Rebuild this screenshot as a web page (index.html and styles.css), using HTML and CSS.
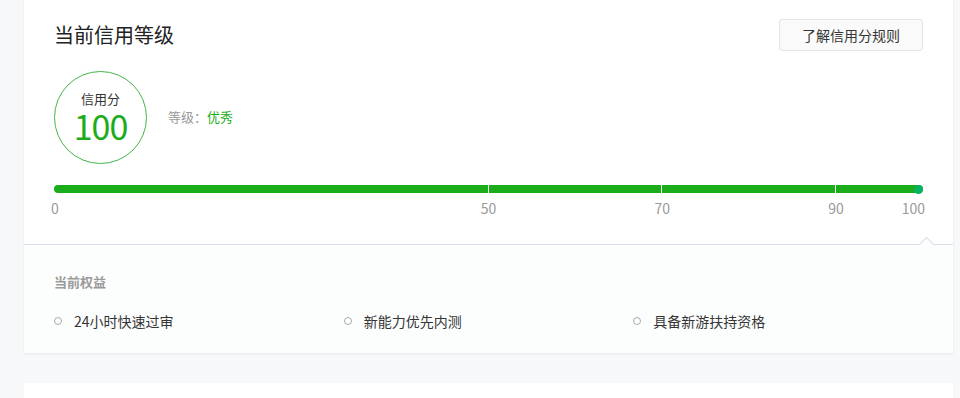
FILE: index.html
```html
<!DOCTYPE html>
<html lang="zh-CN">
<head>
    <meta charset="UTF-8">
    <meta name="viewport" content="width=device-width, initial-scale=1.0">
    <title>信用等级</title>
    <link rel="stylesheet" href="styles.css">
</head>
<body>
<main class="page">
    <section class="card">
        <div class="card-top">
            <div class="card-head">
                <h2 class="card-title">当前信用等级</h2>
                <a class="btn" href="#">了解信用分规则</a>
            </div>

            <div class="score">
                <div class="score-circle">
                    <span class="score-label">信用分</span>
                    <span class="score-value">100</span>
                </div>
                <div class="score-level">等级：<em>优秀</em></div>
            </div>

            <div class="bar">
                <div class="bar-track">
                    <i class="bar-tick" style="left: 50%"></i>
                    <i class="bar-tick" style="left: 70%"></i>
                    <i class="bar-tick" style="left: 90%"></i>
                    <i class="bar-dot"></i>
                </div>
                <div class="bar-scale">
                    <span class="bar-num bar-num-first" style="left: 0%">0</span>
                    <span class="bar-num" style="left: 50%">50</span>
                    <span class="bar-num" style="left: 70%">70</span>
                    <span class="bar-num" style="left: 90%">90</span>
                    <span class="bar-num bar-num-last" style="left: 100%">100</span>
                </div>
            </div>
        </div>

        <div class="card-bottom">
            <h3 class="rights-title">当前权益</h3>
            <ul class="rights">
                <li>24小时快速过审</li>
                <li>新能力优先内测</li>
                <li>具备新游扶持资格</li>
            </ul>
        </div>
    </section>

    <section class="card card-next"></section>
</main>
</body>
</html>
```

FILE: styles.css
```css
body {
    margin: 0;
    padding: 0;
    background: #f7f8fa;
    color: #353535;
    font-family: "Noto Sans CJK SC", "Noto Sans", sans-serif;
    overflow: hidden;
}

.page {
    width: 929px;
    margin-left: 24px;
}

.card {
    background: #fff;
    box-shadow: 0 1px 2px rgba(0, 0, 0, 0.08);
}

.card-top {
    position: relative;
    padding: 19px 30px 0;
    height: 225px;
    border-bottom: 1px solid #d9dde8;
}

/* little arrow pointing at the current score */
.card-top::after {
    content: "";
    position: absolute;
    right: 21px;
    bottom: -6px;
    width: 10px;
    height: 10px;
    background: #fcfdfd;
    border-top: 1px solid #d9dde8;
    border-left: 1px solid #d9dde8;
    transform: rotate(45deg);
}

.card-head {
    display: flex;
    justify-content: space-between;
    align-items: center;
    height: 32px;
}

.card-title {
    margin: 0;
    font-size: 20px;
    font-weight: normal;
    color: #222;
    line-height: 32px;
}

.btn {
    display: block;
    width: 142px;
    height: 30px;
    line-height: 30px;
    text-align: center;
    border: 1px solid #e4e4e8;
    border-radius: 3px;
    background: #fafafa;
    color: #353535;
    font-size: 14px;
    text-decoration: none;
}

.score {
    display: flex;
    align-items: center;
    margin-top: 20px;
}

.score-circle {
    box-sizing: border-box;
    width: 93px;
    height: 93px;
    border: 1px solid #44b549;
    border-radius: 50%;
    display: flex;
    flex-direction: column;
    align-items: center;
    padding-top: 18px;
}

.score-label {
    font-size: 13px;
    line-height: 18px;
    color: #353535;
}

.score-value {
    margin-top: 1px;
    font-size: 34px;
    line-height: 34px;
    color: #1aad19;
    letter-spacing: -1px;
}

.score-level {
    margin-left: 21px;
    margin-top: -2px;
    font-size: 13px;
    color: #9a9a9a;
}

.score-level em {
    font-style: normal;
    color: #1aad19;
}

.bar {
    margin-top: 21px;
}

.bar-track {
    position: relative;
    height: 8px;
    border-radius: 4px;
    background: #1aad19;
}

.bar-tick {
    position: absolute;
    top: 0;
    width: 1px;
    height: 8px;
    margin-left: -1px;
    background: #fff;
}

.bar-dot {
    position: absolute;
    right: 0;
    top: -0.5px;
    width: 9px;
    height: 9px;
    border-radius: 50%;
    background: #07b262;
}

.bar-scale {
    position: relative;
    height: 28px;
}

.bar-num {
    position: absolute;
    top: 5px;
    transform: translateX(-50%);
    font-size: 14px;
    line-height: 20px;
    color: #9a9a9a;
}

.bar-num-first {
    transform: translateX(-3px);
}

.bar-num-last {
    transform: translateX(-100%) translateX(2px);
}

.card-bottom {
    background: #fcfdfd;
    padding: 27px 30px 0;
    height: 81px;
}

.rights-title {
    margin: 0;
    font-size: 13px;
    font-weight: bold;
    color: #9a9a9a;
    line-height: 20px;
}

.rights {
    list-style: none;
    margin: 19px 0 0;
    padding: 0;
    display: grid;
    grid-template-columns: repeat(3, 1fr);
}

.rights li {
    position: relative;
    padding-left: 20px;
    font-size: 14px;
    line-height: 20px;
    color: #353535;
}

.rights li::before {
    content: "";
    position: absolute;
    left: 0;
    top: 6px;
    box-sizing: border-box;
    width: 8px;
    height: 8px;
    border: 1px solid #aaa;
    border-radius: 50%;
}

.card-next {
    margin-top: 30px;
    height: 60px;
    box-shadow: none;
}
```
